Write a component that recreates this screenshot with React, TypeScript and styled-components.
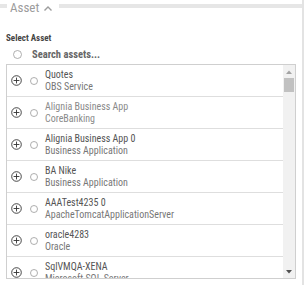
import React from 'react';
import styled, { createGlobalStyle } from 'styled-components';

const Global = createGlobalStyle`
  html, body { margin: 0; padding: 0; background: #fff; }
  body {
    font-family: "Roboto Condensed", sans-serif;
  }
`;

const Panel = styled.div`
  width: 302px;
  height: 285px;
  border-right: 2px solid #e3e3e3;
  overflow: hidden;
  display: flex;
  flex-direction: column;
`;

const Header = styled.div`
  display: flex;
  align-items: flex-start;
  height: 18px;
`;

const Bar = styled.div<{ $grow?: boolean }>`
  height: 4px;
  margin-top: 4px;
  background: #e6e6e6;
  width: ${(p) => (p.$grow ? 'auto' : '7px')};
  flex: ${(p) => (p.$grow ? '1' : 'none')};
`;

const Title = styled.div`
  display: flex;
  align-items: center;
  gap: 4px;
  padding: 0 6px 0 3px;
  font-size: 13px;
  line-height: 16px;
  color: #9c9c9c;
`;

const Body = styled.div`
  padding: 0 6px;
  display: flex;
  flex-direction: column;
`;

const SelectLabel = styled.div`
  margin-top: 14px;
  font-size: 9px;
  line-height: 12px;
  font-weight: 700;
  color: #444;
`;

const SearchRow = styled.div`
  display: flex;
  align-items: center;
  gap: 10px;
  height: 16px;
  padding-left: 7px;
  margin-top: 2px;
  font-size: 10.5px;
  font-weight: 700;
  color: #666;
`;

const ListBox = styled.div`
  margin-top: 2px;
  height: 213px;
  border: 1px solid #cfcfcf;
  display: flex;
`;

const Rows = styled.div`
  flex: 1;
  overflow: hidden;
`;

const Row = styled.div`
  height: 31px;
  border-bottom: 1px solid #dedede;
  display: flex;
  align-items: center;
  padding-left: 4px;
  gap: 8px;
`;

const Texts = styled.div<{ $muted?: boolean }>`
  display: flex;
  flex-direction: column;
  margin-left: -1px;
  font-size: 10px;
  line-height: 12px;
  color: ${(p) => (p.$muted ? '#8a8a8a' : '#555')};
  white-space: nowrap;
`;

const Sub = styled.span<{ $muted?: boolean }>`
  color: ${(p) => (p.$muted ? '#8a8a8a' : '#777')};
`;

const Scroll = styled.div`
  width: 12px;
  background: #f1f1f1;
  display: flex;
  flex-direction: column;
  align-items: center;
`;

const ArrowBox = styled.div`
  height: 13px;
  display: flex;
  align-items: center;
  justify-content: center;
`;

const Track = styled.div`
  flex: 1;
  width: 100%;
  display: flex;
  flex-direction: column;
  align-items: center;
`;

const Thumb = styled.div`
  width: 10px;
  height: 14px;
  background: #c1c1c1;
`;

const PlusCircle = () => (
  <svg width="11" height="11" viewBox="0 0 11 11">
    <circle cx="5.5" cy="5.5" r="4.8" fill="none" stroke="#333" strokeWidth="0.9" />
    <path d="M5.5 2.6v5.8M2.6 5.5h5.8" stroke="#333" strokeWidth="0.9" />
  </svg>
);

const Radio = ({ size = 8 }: { size?: number }) => (
  <svg width={size} height={size} viewBox={`0 0 ${size} ${size}`}>
    <circle cx={size / 2} cy={size / 2} r={size / 2 - 0.5} fill="none" stroke="#9a9a9a" strokeWidth="0.8" />
  </svg>
);

const Chevron = () => (
  <svg width="10" height="7" viewBox="0 0 10 7">
    <path d="M1.5 5.5L5 2l3.5 3.5" fill="none" stroke="#9c9c9c" strokeWidth="1.4" />
  </svg>
);

const Tri = ({ up, color }: { up?: boolean; color: string }) => (
  <svg width="6" height="4" viewBox="0 0 6 4">
    <path d={up ? 'M0 4L3 0.5L6 4Z' : 'M0 0L3 3.5L6 0Z'} fill={color} />
  </svg>
);

const items = [
  { t: 'Quotes', s: 'OBS Service' },
  { t: 'Alignia Business App', s: 'CoreBanking', muted: true },
  { t: 'Alignia Business App 0', s: 'Business Application' },
  { t: 'BA Nike', s: 'Business Application' },
  { t: 'AAATest4235 0', s: 'ApacheTomcatApplicationServer' },
  { t: 'oracle4283', s: 'Oracle' },
  { t: 'SqlVMQA-XENA', s: 'Microsoft SQL Server' },
];

export default function App() {
  return (
    <>
      <Global />
      <Panel>
        <Header>
          <Bar />
          <Title>
            Asset <Chevron />
          </Title>
          <Bar $grow />
        </Header>
        <Body>
          <SelectLabel>Select Asset</SelectLabel>
          <SearchRow>
            <Radio size={9} />
            <span>Search assets...</span>
          </SearchRow>
          <ListBox>
            <Rows>
              {items.map((it) => (
                <Row key={it.t}>
                  <PlusCircle />
                  <Radio />
                  <Texts $muted={it.muted}>
                    <span>{it.t}</span>
                    <Sub $muted={it.muted}>{it.s}</Sub>
                  </Texts>
                </Row>
              ))}
            </Rows>
            <Scroll>
              <ArrowBox>
                <Tri up color="#a3a3a3" />
              </ArrowBox>
              <Track>
                <Thumb />
              </Track>
              <ArrowBox>
                <Tri color="#505050" />
              </ArrowBox>
            </Scroll>
          </ListBox>
        </Body>
      </Panel>
    </>
  );
}
